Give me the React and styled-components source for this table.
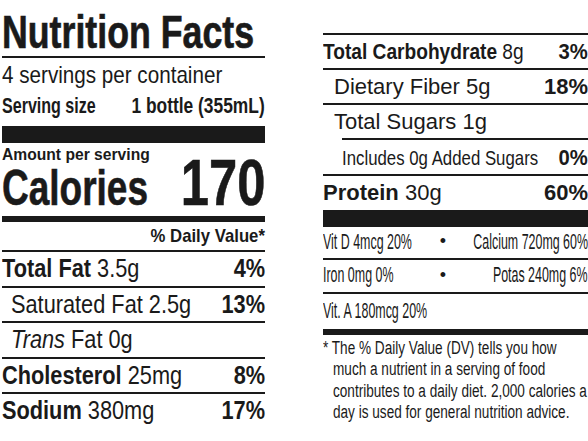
import React from 'react'
import styled, { createGlobalStyle } from 'styled-components'

const INK = '#1a1a1a'

const GlobalStyle = createGlobalStyle`
  html, body {
    margin: 0;
    padding: 0;
    background: #fff;
    overflow-x: hidden;
  }
  body {
    font-family: "Liberation Sans", Arial, sans-serif;
    color: ${INK};
  }
`

// the label type is a condensed grotesque, so plain Liberation Sans is narrowed
const Squeeze = styled.span`
  display: inline-block;
  flex: none;
  white-space: nowrap;
  transform: scaleX(${p => p.$sx});
  transform-origin: ${p => (p.$end ? 'right' : 'left')} center;
`

// holds a squeezed text; an end cell is pinned to the right edge and lets
// the unscaled box run out to the left
const Cell = styled.div`
  display: flex;
  min-width: 0;
  flex: ${p => (p.$end ? '0 0 0' : '1 1 0')};
  justify-content: ${p => (p.$end ? 'flex-end' : 'flex-start')};
  align-items: baseline;
`

const Strong = styled.b`
  font-weight: 700;
`

const Em = styled.i`
  font-style: italic;
`

const Page = styled.div`
  width: 588px;
  box-sizing: border-box;
  display: grid;
  grid-template-columns: 263px 265px;
  column-gap: 58px;
  align-items: start;
  padding: 8px 0 0 2px;
  overflow: hidden;
`

const Column = styled.div`
  display: flex;
  flex-direction: column;
  min-width: 0;
  margin-top: ${p => p.$top || 0}px;
`

const Title = styled.h1`
  margin: 0;
  font-size: 47px;
  line-height: 48px;
  font-weight: 700;
  -webkit-text-stroke: 0.7px ${INK};
  border-bottom: 2px solid ${INK};
`

const Servings = styled.div`
  font-size: 24px;
  line-height: 33px;
`

const ServingSize = styled.div`
  display: flex;
  font-size: 22px;
  line-height: 29px;
  font-weight: 700;
`

const Bar = styled.div`
  height: ${p => p.$h}px;
  margin-top: ${p => p.$mt || 0}px;
  background: ${INK};
`

const Amount = styled.div`
  font-size: 17px;
  line-height: 23px;
  font-weight: 700;
`

const CaloriesRow = styled.div`
  display: flex;
  align-items: baseline;
  font-weight: 700;
  -webkit-text-stroke: 0.6px ${INK};
`

const CaloriesWord = styled(Squeeze)`
  font-size: 50px;
  line-height: 43px;
`

const CaloriesNumber = styled(Squeeze)`
  font-size: 65px;
  line-height: 33px;
`

const DailyValue = styled.div`
  display: flex;
  justify-content: flex-end;
  font-size: 19px;
  line-height: 28px;
  font-weight: 700;
  border-bottom: 2px solid ${INK};
`

const NutrientRow = styled.div`
  display: flex;
  height: 33.6px;
  font-size: 25px;
  line-height: 33.6px;
  padding-left: ${p => (p.$sub ? 9 : 0)}px;
  border-bottom: ${p => (p.$last ? 'none' : `2px solid ${INK}`)};
`

const Percent = styled(Squeeze)`
  font-weight: 700;
`

const SideRow = styled.div`
  display: flex;
  height: 33.3px;
  font-size: ${p => p.$size || 22}px;
  line-height: ${p => p.$lh || 33.3}px;
  padding-left: ${p => (p.$sub ? 11 : 0)}px;
  margin-left: ${p => p.$inset || 0}px;
  border-top: 2px solid ${INK};
`

const SidePercent = styled(Squeeze)`
  font-size: 22px;
  font-weight: 700;
`

const VitRow = styled.div`
  display: grid;
  grid-template-columns: 115px 10px minmax(0, 1fr);
  font-size: 22px;
  line-height: ${p => p.$lh}px;
  padding-bottom: ${p => p.$pb}px;
  border-bottom: ${p => (p.$rule ? `2px solid ${INK}` : 'none')};
`

const Dot = styled.span`
  font-size: 18px;
  text-align: center;
`

const Footnote = styled.div`
  padding-top: 3px;
  font-size: 18px;
  line-height: 21.5px;
`

const FootLine = styled.div`
  padding-left: ${p => (p.$hang ? 10 : 0)}px;
`

const footLines = [
  '* The % Daily Value (DV) tells you how',
  'much a nutrient in a serving of food',
  'contributes to a daily diet. 2,000 calories a',
  'day is used for general nutrition advice.',
]

export default function App() {
  return (
    <>
      <GlobalStyle />
      <Page>
        <Column>
          <Title>
            <Squeeze $sx={0.76}>Nutrition Facts</Squeeze>
          </Title>
          <Servings>
            <Squeeze $sx={0.86}>4 servings per container</Squeeze>
          </Servings>
          <ServingSize>
            <Cell><Squeeze $sx={0.73}>Serving size</Squeeze></Cell>
            <Cell $end><Squeeze $sx={0.79} $end>1 bottle (355mL)</Squeeze></Cell>
          </ServingSize>
          <Bar $h={17} $mt={6} />
          <Amount>
            <Squeeze $sx={0.92}>Amount per serving</Squeeze>
          </Amount>
          <CaloriesRow>
            <Cell><CaloriesWord $sx={0.74}>Calories</CaloriesWord></Cell>
            <Cell $end><CaloriesNumber $sx={0.78} $end>170</CaloriesNumber></Cell>
          </CaloriesRow>
          <Bar $h={6} $mt={6} />
          <DailyValue>
            <Squeeze $sx={0.88} $end>% Daily Value*</Squeeze>
          </DailyValue>
          <NutrientRow>
            <Cell><Squeeze $sx={0.87}><Strong>Total Fat</Strong> 3.5g</Squeeze></Cell>
            <Cell $end><Percent $sx={0.87} $end>4%</Percent></Cell>
          </NutrientRow>
          <NutrientRow $sub>
            <Cell><Squeeze $sx={0.87}>Saturated Fat 2.5g</Squeeze></Cell>
            <Cell $end><Percent $sx={0.87} $end>13%</Percent></Cell>
          </NutrientRow>
          <NutrientRow $sub>
            <Cell><Squeeze $sx={0.87}><Em>Trans</Em> Fat 0g</Squeeze></Cell>
          </NutrientRow>
          <NutrientRow>
            <Cell><Squeeze $sx={0.87}><Strong>Cholesterol</Strong> 25mg</Squeeze></Cell>
            <Cell $end><Percent $sx={0.87} $end>8%</Percent></Cell>
          </NutrientRow>
          <NutrientRow $last>
            <Cell><Squeeze $sx={0.87}><Strong>Sodium</Strong> 380mg</Squeeze></Cell>
            <Cell $end><Percent $sx={0.87} $end>17%</Percent></Cell>
          </NutrientRow>
        </Column>

        <Column $top={24.5}>
          <SideRow>
            <Cell><Squeeze $sx={0.87}><Strong>Total Carbohydrate</Strong> 8g</Squeeze></Cell>
            <Cell $end><SidePercent $sx={0.92} $end>3%</SidePercent></Cell>
          </SideRow>
          <SideRow $sub>
            <Cell><Squeeze $sx={1}>Dietary Fiber 5g</Squeeze></Cell>
            <Cell $end><SidePercent $sx={1} $end>18%</SidePercent></Cell>
          </SideRow>
          <SideRow $sub>
            <Cell><Squeeze $sx={1}>Total Sugars 1g</Squeeze></Cell>
          </SideRow>
          <SideRow $inset={19} $size={21} $lh={35}>
            <Cell><Squeeze $sx={0.8}>Includes 0g Added Sugars</Squeeze></Cell>
            <Cell $end><SidePercent $sx={0.92} $end>0%</SidePercent></Cell>
          </SideRow>
          <SideRow>
            <Cell><Squeeze $sx={1}><Strong>Protein</Strong> 30g</Squeeze></Cell>
            <Cell $end><SidePercent $sx={1} $end>60%</SidePercent></Cell>
          </SideRow>
          <Bar $h={17} $mt={1} />
          <VitRow $lh={29} $pb={2.5} $rule>
            <Cell><Squeeze $sx={0.565}>Vit D 4mcg 20%</Squeeze></Cell>
            <Dot>•</Dot>
            <Cell $end><Squeeze $sx={0.565} $end>Calcium 720mg 60%</Squeeze></Cell>
          </VitRow>
          <VitRow $lh={30} $pb={2} $rule>
            <Cell><Squeeze $sx={0.565}>Iron 0mg 0%</Squeeze></Cell>
            <Dot>•</Dot>
            <Cell $end><Squeeze $sx={0.565} $end>Potas 240mg 6%</Squeeze></Cell>
          </VitRow>
          <VitRow $lh={34} $pb={0.5}>
            <Cell><Squeeze $sx={0.565}>Vit. A 180mcg 20%</Squeeze></Cell>
          </VitRow>
          <Bar $h={6} />
          <Footnote>
            {footLines.map((line, i) => (
              <FootLine key={i} $hang={i > 0}>
                <Squeeze $sx={0.755}>{line}</Squeeze>
              </FootLine>
            ))}
          </Footnote>
        </Column>
      </Page>
    </>
  )
}
